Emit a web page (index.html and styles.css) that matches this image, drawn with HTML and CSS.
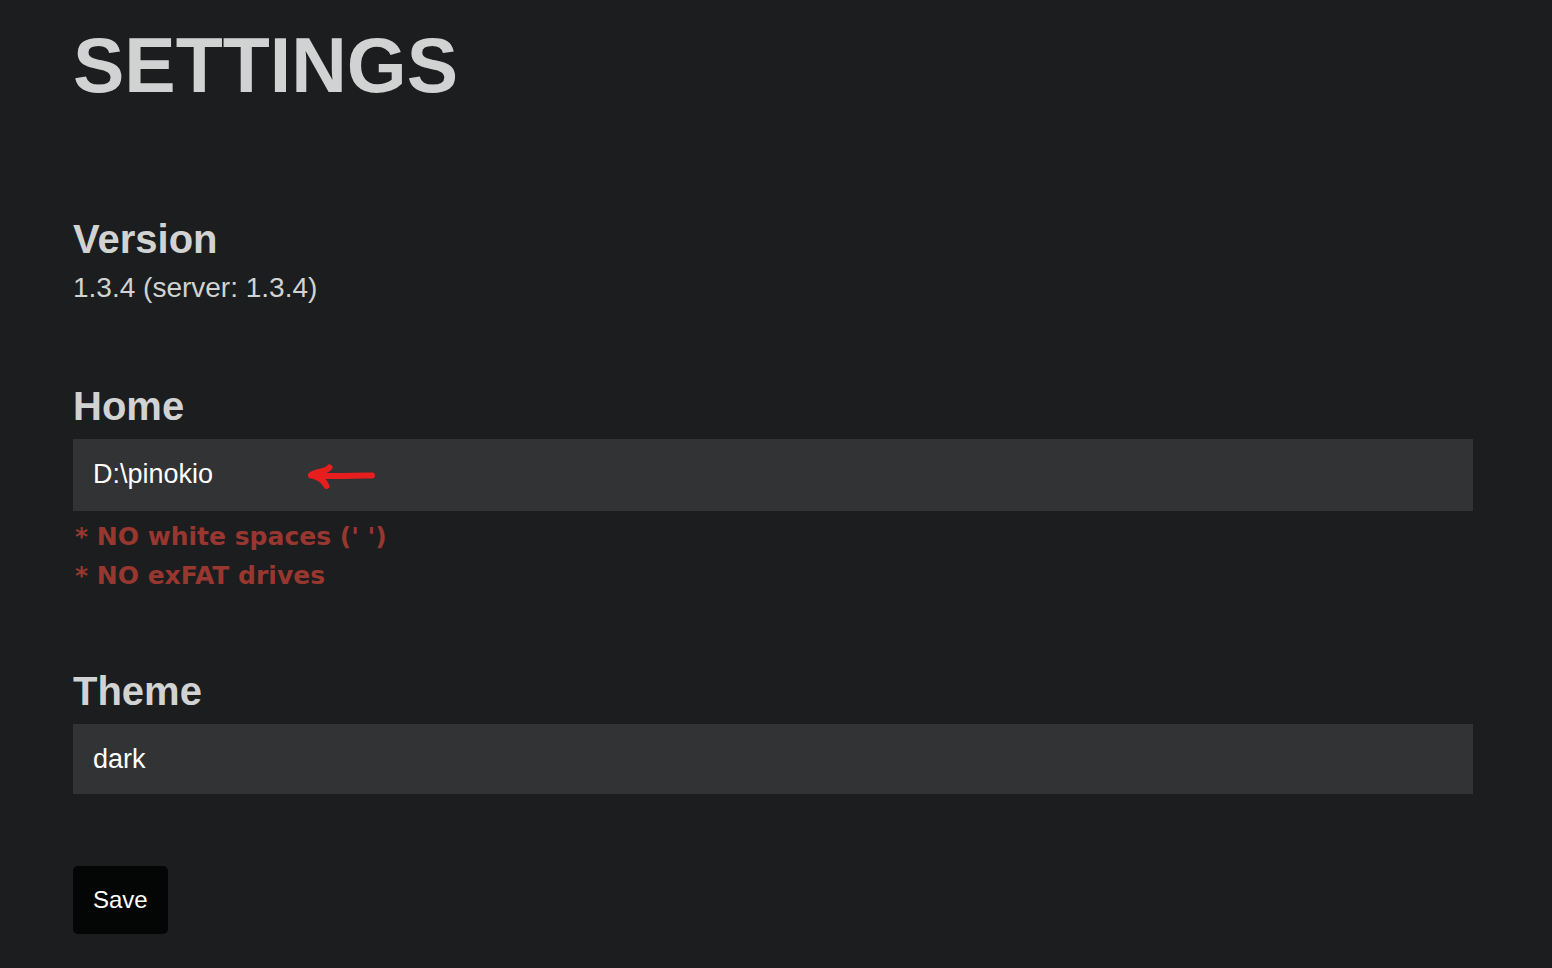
FILE: index.html
```html
<!DOCTYPE html>
<html lang="en">
<head>
<meta charset="utf-8">
<title>Settings</title>
<link rel="stylesheet" href="styles.css">
</head>
<body>
<main class="settings">
  <h1 class="title">SETTINGS</h1>
  <form class="form">
    <section class="group">
      <h2 class="label">Version</h2>
      <p class="version">1.3.4 (server: 1.3.4)</p>
    </section>
    <section class="group">
      <label class="label" for="home">Home</label>
      <div class="field-wrap">
        <input class="field" id="home" type="text" value="D:\pinokio">
        <svg class="arrow" width="70" height="30" viewBox="0 0 70 30" aria-hidden="true">
          <path d="M66 14.500C52 14 34 16 5 14.500M23.500 6.500C20 11 11 10 5 14C12 16 17 18 20.500 25" />
          <path d="M4 13L22 8L18 20Z" />
        </svg>
      </div>
      <ul class="notes">
        <li>* NO white spaces (' ')</li>
        <li>* NO exFAT drives</li>
      </ul>
    </section>
    <section class="group">
      <label class="label" for="theme">Theme</label>
      <select class="field field-select" id="theme">
        <option selected>dark</option>
        <option>light</option>
      </select>
    </section>
    <button class="save" type="button">Save</button>
  </form>
</main>
</body>
</html>
```
FILE: styles.css
```css
* {
  box-sizing: border-box;
}

body {
  margin: 0;
  background: #1c1d1e;
  color: #d1d3d2;
  font-family: "Liberation Sans", Arial, sans-serif;
}

.settings {
  padding: 20px 79px 34px 73px;
}

.title {
  margin: 0 0 106px;
  font-size: 77px;
  line-height: 90px;
  font-weight: bold;
}

.form {
  display: flex;
  flex-direction: column;
  align-items: flex-start;
}

.group {
  display: flex;
  flex-direction: column;
  width: 100%;
  margin-bottom: 72px;
}

.label {
  display: block;
  margin: 0 0 10px;
  font-size: 40px;
  line-height: 46px;
  font-weight: bold;
}

.version {
  margin: 0;
  padding-bottom: 7px;
  font-size: 28px;
  line-height: 32px;
}

.field-wrap {
  position: relative;
}

.field {
  display: block;
  width: 100%;
  height: 72px;
  padding: 0 20px 2px;
  border: 0;
  border-radius: 0;
  outline: 0;
  appearance: none;
  background: #323334;
  color: #ffffff;
  font-family: inherit;
  font-size: 27px;
}

.field-select {
  height: 70px;
  padding-bottom: 0;
}

.arrow {
  position: absolute;
  left: 233px;
  top: 22px;
  fill: #e81e1e;
}

.arrow path:first-child {
  fill: none;
  stroke: #e81e1e;
  stroke-width: 6;
  stroke-linecap: round;
  stroke-linejoin: round;
}

.notes {
  margin: 6px 0 0;
  padding: 0 2px 1px;
  list-style: none;
  color: #983730;
  font-family: "DejaVu Sans", Verdana, sans-serif;
  font-size: 25px;
  line-height: 39px;
  font-weight: bold;
}

.save {
  padding: 20px;
  border: 0;
  border-radius: 5px;
  background: #040606;
  color: #ffffff;
  font-family: inherit;
  font-size: 24px;
  line-height: 28px;
}
```
